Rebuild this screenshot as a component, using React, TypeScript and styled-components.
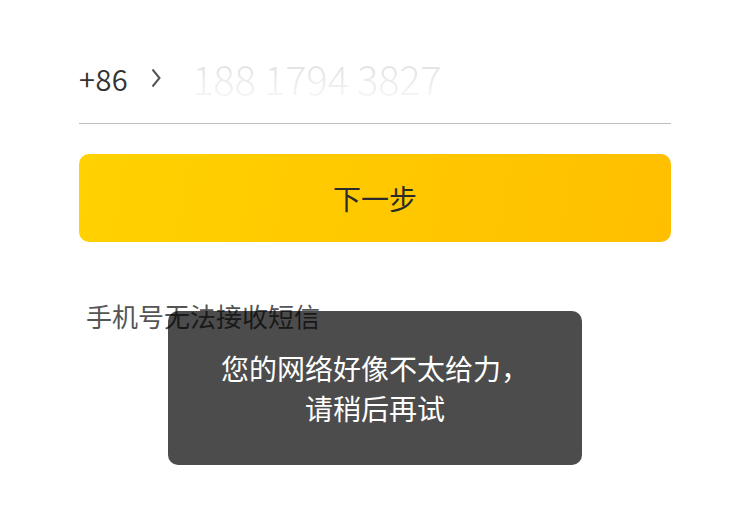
import React from 'react'
import styled, { createGlobalStyle } from 'styled-components'

const GlobalStyle = createGlobalStyle`
  html, body {
    margin: 0;
    padding: 0;
    background: #ffffff;
    font-family: "Noto Sans CJK SC", "Noto Sans", sans-serif;
  }
`

const Page = styled.div`
  position: relative;
  width: 750px;
  height: 506px;
  overflow: hidden;
  box-sizing: border-box;
  padding: 0 79px;
`

const PhoneRow = styled.div`
  display: flex;
  align-items: center;
  height: 124px;
  padding-top: 32px;
  box-sizing: border-box;
  border-bottom: 1px solid #bdbdbd;
`

const AreaCode = styled.span`
  font-size: 29px;
  font-weight: 350;
  color: #333333;
  letter-spacing: 0.5px;
`

const Chevron = styled.svg`
  margin-left: 23px;
  width: 10px;
  height: 20px;
`

const PhoneInput = styled.span`
  margin-left: 31px;
  font-size: 40px;
  font-weight: 300;
  letter-spacing: -0.3px;
  background: linear-gradient(180deg, #e0e0e0 20%, #f8f8f8 90%);
  -webkit-background-clip: text;
  background-clip: text;
  color: transparent;
`

const NextButton = styled.button`
  display: flex;
  align-items: center;
  justify-content: center;
  width: 100%;
  height: 88px;
  margin-top: 30px;
  border: none;
  border-radius: 10px;
  background: linear-gradient(100deg, #ffd200 0%, #ffbf00 100%);
  font-family: inherit;
  font-size: 28px;
  color: #2b2b2b;
  padding: 0;
`

const HelpLink = styled.div`
  margin-top: 58px;
  margin-left: 7px;
  font-size: 26px;
  line-height: 32px;
  color: #555555;
`

const Toast = styled.div`
  position: absolute;
  left: 168px;
  top: 311px;
  width: 414px;
  height: 154px;
  box-sizing: border-box;
  padding-top: 37px;
  border-radius: 10px;
  background: rgba(0, 0, 0, 0.7);
  color: #ffffff;
  font-size: 28px;
  line-height: 40px;
  text-align: center;
`

export default function App() {
  return (
    <>
      <GlobalStyle />
      <Page>
        <PhoneRow>
          <AreaCode>+86</AreaCode>
          <Chevron viewBox="0 0 10 20">
            <path d="M1.5 1.5 L8.5 10 L1.5 18.5" fill="none" stroke="#555" strokeWidth="2" />
          </Chevron>
          <PhoneInput>188 1794 3827</PhoneInput>
        </PhoneRow>
        <NextButton type="button">下一步</NextButton>
        <HelpLink>手机号无法接收短信</HelpLink>
        <Toast>
          您的网络好像不太给力，
          <br />
          请稍后再试
        </Toast>
      </Page>
    </>
  )
}
